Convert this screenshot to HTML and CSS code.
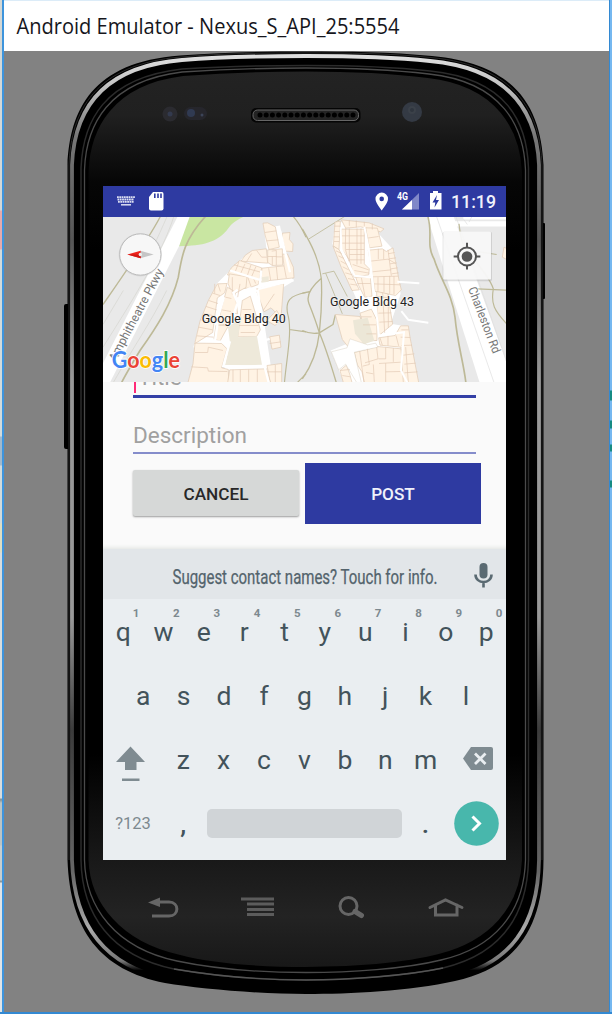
FILE: index.html
```html
<!DOCTYPE html>
<html lang="en">
<head>
<meta charset="utf-8">
<title>Android Emulator</title>
<link rel="stylesheet" href="styles.css">
</head>
<body>
<div class="window">
  <header class="titlebar">
    <svg width="400" height="40" viewBox="0 0 400 40"><text class="caption" x="12.500" y="23" textLength="383" lengthAdjust="spacingAndGlyphs">Android Emulator - Nexus_S_API_25:5554</text></svg>
  </header>
  <main class="stage">
    <svg class="device" viewBox="0 51 612 963" width="612" height="963">
      <defs>
        <linearGradient id="face" x1="0" y1="70" x2="0" y2="970" gradientUnits="userSpaceOnUse">
          <stop offset="0" stop-color="#232323"/><stop offset=".05" stop-color="#202020"/><stop offset=".125" stop-color="#060606"/><stop offset=".2" stop-color="#000"/><stop offset=".76" stop-color="#000"/><stop offset=".88" stop-color="#191919"/><stop offset=".94" stop-color="#232323"/><stop offset="1" stop-color="#171717"/>
        </linearGradient>
        <linearGradient id="shine" x1="0" y1="52" x2="0" y2="994" gradientUnits="userSpaceOnUse">
          <stop offset="0" stop-color="#e2e2e2"/><stop offset=".035" stop-color="#c4c4c4"/><stop offset=".09" stop-color="#777"/><stop offset=".2" stop-color="#555"/><stop offset=".35" stop-color="#999"/><stop offset=".6" stop-color="#999"/><stop offset=".72" stop-color="#3b3b3b"/><stop offset=".87" stop-color="#666"/><stop offset=".93" stop-color="#aaa"/><stop offset=".965" stop-color="#777"/><stop offset=".975" stop-color="#000"/>
        </linearGradient>
      </defs>
      <rect x="64" y="304" width="8" height="145" rx="2"/>
      <rect x="538" y="223" width="7" height="76" rx="1"/>
      <path d="M67.500 165C70 110 92 62 180 55.500C225 52 265 51.500 306 51.500S390 52 432 56C520 64 541 112 543.500 165V860C543 930 515 968 455 981C410 991 350 994 306 994S200 989 165 983C100 970 70 930 67.500 860Z"/>
      <path d="M72 165C74 116 96 67 182 60C225 56.500 265 56 306 56S388 56.500 430 61C516 69 537 118 539 165V860C538 926 510 964 452 977C410 986 350 988 306 988S200 985 168 979C104 966 74 925 72 860Z" fill="none" stroke="url(#shine)" stroke-width="3.800"/>
      <path d="M69 860V165C71 112 94 64 181 57C225 53 265 53 306 53S389 53 431 57.500C518 66 540 114 542 165V860" fill="none" stroke="#333" stroke-width=".8"/>
      <g fill="none" stroke="#2b2b2b" stroke-width="1.500">
        <path d="M81 168C83 122 103 78 182 69C230 66 268 65.500 306 65.500S390 66.500 430 71C508 79 527 123 528.500 168V860C527 920 498 955 443 968C405 976 350 980 306 980S215 976 174 969C111 956 82 915 81 860Z"/>
        <path stroke="#4a4a4a" stroke-width="1.300" d="M84.500 170C86 125 108 81 182 72C230 69 268 68 306 68S390 69.500 429 74C503 82 524 127 525.500 170V860C524 913 494 948 441 960C405 969 350 972.500 306 972.500S215 969 177 961C115 948 85.500 907 84.500 860Z"/>
        <path stroke="#555" stroke-width="1.300" d="M174 969C215 976 265 980 306 980S405 976 443 968"/>
      </g>
      <path d="M87.500 172C89 129 111 84 183 75C230 71.500 268 70.500 306 70.500S388 72 428 77C499 85 521 131 523 172V860C521 908 490 942 439 955C405 964 350 968 306 968S215 965 180 956C120 943 89 903 87.500 860Z" fill="url(#face)" stroke="#000" stroke-width="2"/>
      <g>
        <circle cx="170" cy="114" r="7.500" fill="#2b2b30"/><circle cx="170" cy="114" r="2.500" fill="#333a4e"/>
        <rect x="184" y="107" width="23" height="13" rx="6.500" fill="#26262c"/><circle cx="191" cy="113" r="4" fill="#303a52"/><circle cx="202" cy="115" r="1.500" fill="#3c4458"/>
        <circle cx="412" cy="112" r="10" fill="#343a44"/><circle cx="412" cy="110" r="4" fill="#3b4149"/><circle cx="412" cy="110" r="2" fill="#2f353e"/>
        <rect x="251" y="108" width="109.500" height="14.500" rx="5" fill="#050505"/>
        <rect x="253" y="110" width="105.500" height="10.500" rx="4.500" fill="#242424" stroke="#666"/>
        <path d="M260 115H355" stroke="#000" stroke-width="5" stroke-linecap="round" stroke-dasharray="0 6.200"/>
      </g>
      <g fill="none" stroke="#666" stroke-width="3">
        <path d="M158 902H169C179.500 902 179.500 916 169 916H152"/><path d="M148 902.500L160 897.500V907Z" fill="#666" stroke="none"/>
        <path d="M241 899H274M247 904H274M247 909.500H274M247 914.500H274" stroke-width="3" stroke="#5c5c5c"/>
        <circle cx="348.500" cy="906" r="8.500"/><path d="M355 911.500L361.500 915.500" stroke-width="5" stroke-linecap="round"/>
        <path d="M430 907.500L445.500 900L462 907.500M435.500 905V915H457V905" stroke-linecap="round"/>
      </g>
    </svg>
    <section class="screen">
      <div class="status">
        <svg width="403" height="31" viewBox="103 186 403 31">
          <g stroke="#dcdff2" stroke-width="1.800" stroke-dasharray="1.800 .5"><path d="M117 197.200H135M117.500 199.500H134M118 201.800H134"/></g><path d="M121 204.800H131" stroke="#dcdff2" stroke-width="1.500"/>
          <path d="M153 192H162Q163.500 192 163.500 194V208.500Q163.500 210.500 161.500 210.500H151Q149 210.500 149 208.500V197Z" fill="#fff"/><path d="M154.800 193.500V198M158 193.500V198M161 193.500V198" stroke="#2e3aa1" stroke-width="1.600"/>
          <path fill="#fff" fill-rule="evenodd" d="M381.700 210.500C379 206.500 375.500 202.500 375.500 198.800A6.200 6.200 0 0 1 388 198.800C388 202.500 384.500 206.500 381.700 210.500ZM381.700 196.600A2.300 2.300 0 1 0 381.700 201.200A2.300 2.300 0 1 0 381.700 196.600"/>
          <text x="397" y="200" class="lte" textLength="11" lengthAdjust="spacingAndGlyphs">4G</text>
          <path d="M402 209.500L419 193V209.500Z" fill="#8088c8"/><path d="M402 209.500L412 200V209.500Z" fill="#fff"/>
          <path d="M430 193H433V191H438V193H441.500V209.500H430Z" fill="#fff"/><path d="M437 195L432.500 202.500H435.300L434.500 207.500L439 200H436Z" fill="#2e3aa1"/>
          <text x="451" y="208.200" class="clock" textLength="45" lengthAdjust="spacingAndGlyphs">11:19</text>
        </svg>
      </div>
      <svg class="map" width="403" height="165.500" viewBox="103 216.500 403 165.500">
        <g transform="translate(100 180) scale(.33333)">
          <path d="M262 100H450C400 122 395 130 380 150C350 185 310 196 237 197Z" fill="#c9e6a2"/>
          <path d="M234 106H270L237 197L30 606H9V548Z" fill="#fff"/>
          <g fill="none" stroke="#d5d5cf" stroke-width="2"><path d="M222 106C190 210 110 340 9 500M202 106C170 180 150 220 125 260M9 432L70 330M200 330C150 430 100 500 40 606"/></g>
          <g fill="none" stroke="#bdb997" stroke-width="5" stroke-linejoin="round"><path stroke-width="4" d="M182 106C150 170 80 270 9 372"/><path d="M318 106C250 180 245 230 235 290C215 370 170 440 120 510C90 560 75 585 65 606"/><path stroke-width="3.500" d="M578 106Q600 130 618 170M618 336C570 345 555 360 563 400C578 450 560 530 553 610M568 447L618 454M588 610L618 580"/></g>
          <path d="M490 130L510 140L540 135L555 210L570 280L580 302L550 320L478 329L520 606H370L375 540L280 500L300 430L350 310L430 230L500 210Z" fill="#fff"/>
          <g class="rooms">
            <path d="M489 128L503 127L526 139L538 200L507 207L495 163Z"/><path d="M547 158L570 156L568 177L579 190L578 213L557 212L546 174Z"/>
            <path d="M548 221L562 220L580 260L582 292L483 303L486 263L552 256Z"/><path d="M503 208L547 205L548 254L517 255L503 246Z"/><path d="M457 210L499 205L503 248L423 242L436 224Z"/>
            <path d="M419 240L485 262L475 312L445 323L415 324L438 296L382 283L394 262Z"/><path d="M388 280L441 289L438 321L398 342L384 309Z"/>
            <path d="M352 310L381 309L374 337L352 352L338 456L284 490L300 422L325 360Z"/><path d="M382 320L405 334L413 400L394 397L389 430L354 434L365 380Z"/>
            <path d="M468 326L551 309L543 412L513 382L492 394Z"/><path d="M427 360L451 347L481 448L470 468L413 469Z"/>
            <path d="M348 434L385 436L360 482L342 476Z"/><path d="M285 488L365 489L381 505L365 562L385 567L386 606H264L279 550Z"/><path d="M509 469L538 464L543 500L516 506Z"/><path d="M501 555L545 549V606H511Z"/><path d="M389 568L500 565L511 606H383Z"/><path d="M530 390L545 415L525 435L500 420Z"/>
          </g>
          <path d="M384 440L425 408L414 470L471 467L486 553L375 556L390 487Z" fill="#eee9da"/>
          <path d="M484 290L506 287V304L484 307Z" fill="#eee9da"/>
          <path class="walls" d="M495 156L529 151M500 181L535 178M470 210L485 230H500M455 219L440 243M515 212L529 210V254M529 229H546M503 228H530M517 255V228M506 263L512 299M529 258L533 298M552 256L559 293M417 243L405 276M435 250L421 281M453 253L441 288M468 258L454 290M402 253L482 275M390 271L475 296M443 289L453 318M459 290L467 309M397 342V290M413 350L420 310M338 338L360 345M326 360L354 369M318 378L350 388M311 398L345 407M302 418L341 427M296 440L338 448M291 466L341 470M344 310V339M354 311L361 333M376 350L394 354M365 388L393 393M427 387H454M430 410H468M417 435H475M422 456H465M490 389L523 340M285 516H323L325 500L369 510M274 559L323 562L325 572L382 573M399 568V606M421 568V606M446 567V606M472 566V606M502 574H544M526 553V606M509 489L543 484"/>
          <path d="M426 335L450 323L474 332L492 480L509 475M372 350L357 400L345 482L389 486L370 556L494 559L506 606M413 328L400 337L413 367L400 405M540 150L553 205L570 275M390 270L485 300M484 270L478 325L581 299" fill="none" stroke="#fff" stroke-width="7"/>
          <text class="place" x="305" y="427" textLength="252" lengthAdjust="spacingAndGlyphs">Google Bldg 40</text>
          <text class="road" transform="translate(47 545) rotate(-62)" textLength="308" lengthAdjust="spacingAndGlyphs">Amphitheatre Pkwy</text>
          <circle cx="121" cy="223" r="65" fill="#aaa" opacity=".25"/><circle cx="121" cy="222" r="62" fill="#f7f7f7" stroke="#bbb" stroke-width="3"/>
          <path d="M121 211L161 222L121 233Z" fill="#c5c5c5"/><path d="M82 222L122 211V233Z" fill="#f0241d"/><path d="M82 222L122 233V222Z" fill="#d01a15"/><circle cx="121" cy="222" r="5" fill="#eee"/>
          <text class="logo" x="35" y="563" textLength="205" lengthAdjust="spacingAndGlyphs"><tspan fill="#4285f4">G</tspan><tspan fill="#ea4335">o</tspan><tspan fill="#fbbc05">o</tspan><tspan fill="#4285f4">g</tspan><tspan fill="#34a853">l</tspan><tspan fill="#ea4335">e</tspan></text>
        </g>
        <g transform="translate(304 180) scale(.33333)">
          <path d="M369 106H448L610 552V610H528Z" fill="#fff"/><path d="M440 122H610V138H445ZM478 105H610V117H478Z" fill="#fff"/>
          <path d="M397 106L570 606M455 106L610 550M478 115L490 132M505 106L495 125" fill="none" stroke="#dedede" stroke-width="2"/>
          <g fill="none" stroke="#bdb997" stroke-width="5" stroke-linejoin="round">
            <path d="M371 106C388 160 365 190 390 235C410 300 445 340 453 410C460 490 480 550 486 610"/>
            <path stroke-width="4" d="M-5 145C15 180 45 230 52 295C55 360 50 420 46 457C40 510 20 560-5 595M-5 450Q20 462 46 457L87 432L94 403M46 457C65 500 80 550 98 610M52 293C20 320 5 345 15 370Q35 420 46 457M-5 338L20 333"/>
            <path stroke-width="2.500" d="M15 175L125 106M55 280L90 272L130 348M65 278L115 400"/>
            <path stroke-width="3.500" d="M465 130C470 175 475 200 500 225C530 260 560 300 568 325C560 370 570 390 610 432M520 325L610 329M526 214L578 222"/>
          </g>
          <path d="M94 124L176 130L220 155L270 210L290 340L260 430L310 438L340 606H120L80 510L190 465L155 350L85 190Z" fill="#fff"/>
          <g class="rooms">
            <path d="M93 125L109 122L105 208L88 196Z"/><path d="M112 118L195 127L240 145L230 154L170 139L125 143Z"/>
            <path d="M112 146H181V250L196 265L194 283L150 290L136 238L112 205Z"/><path d="M185 142L220 143L234 197L196 202Z"/><path d="M87 197L105 207L166 328L144 330L112 261Z"/>
            <path d="M193 209L235 205L247 213L267 202L286 304L292 328L275 345L213 333L202 262Z"/>
            <path d="M155 290H199L204 347L182 350L164 315Z"/><path d="M218 333L251 340L266 431L226 464L219 410Z"/>
            <path d="M94 402L168 408L187 486L131 497L115 477Z"/><path d="M168 398L202 386L219 420V480L191 481Z"/>
            <path d="M224 472L273 465L290 436H313L318 470L344 606H287L291 500L228 494Z"/>
            <path d="M151 516L189 507L220 498L291 505L298 606H181L174 574L160 553Z"/><path d="M108 570L127 554L137 580L144 606H118Z"/>
          </g>
          <path d="M147 419L191 412L211 481L180 491L153 460Z" fill="#ece7d7"/>
          <path d="M82 514L129 502L138 475L191 493L215 488L222 500L151 515L160 555L172 606H158L125 551L104 568Z" fill="#fff" stroke="#c8bda8" stroke-width="1"/>
          <path class="walls" d="M125 143L124 206L135 245M136 144V242M159 144V252M171 144V250M112 166H181M114 188H181M126 207H181M137 222H181M138 238H181M146 252L194 268M151 270L196 278M91 137H108M91 153H108M89 169H106M90 183H106M136 119V136M157 120V141M181 124V138M205 129V147M189 173L224 168M96 211L113 219M103 226L120 234M110 242L127 251M116 259L134 268M124 277L145 283M132 294L152 298M139 311L160 314M199 242L252 236L275 249M252 220L272 216M255 235L276 232M258 250L278 247M261 265L281 262M263 280L284 277M204 274L262 268M204 289L283 287M223 205V236M239 207V236M252 208L262 286M222 290V333M240 288V335M257 286V340M270 287V341M205 310L290 313M160 309H200M172 291L183 347M213 347L253 352M219 374L258 375M223 398L262 397M226 425L266 423M236 336L242 457M253 341V442M171 409H203M177 433H216M187 460H217M228 472L235 494M252 466V496M276 465L284 496M292 448H314M290 470L319 471M293 495L324 494M298 524L331 520M301 551L335 548M301 577L341 574M305 500L313 606M167 512L180 606M190 505L196 552L176 557M218 500L222 535L183 547M245 501V535H223M268 503V544M245 548V606M225 549L292 545M245 574L292 573M186 576L208 580M208 552L211 606M108 570L137 567M115 585L139 589"/>
          <path d="M181 139L194 203L210 335L225 465L300 455L291 570L310 606M110 140L112 205L152 286L205 291M280 304L346 308M292 392L313 418L373 427M190 350L265 362" fill="none" stroke="#fff" stroke-width="6"/>
          <path d="M600 200L595 230L610 238V205Z" fill="#fff3e4" stroke="#dfc3ad" stroke-width="2"/>
          <text class="place" x="78" y="377" textLength="252" lengthAdjust="spacingAndGlyphs">Google Bldg 43</text>
          <text class="road" transform="translate(492 325) rotate(69)" textLength="210" lengthAdjust="spacingAndGlyphs">Charleston Rd</text>
          <rect x="416" y="154" width="148" height="148" rx="5" fill="#999" opacity=".3"/><rect x="418" y="153" width="143" height="144" rx="4" fill="#f9f9f9" opacity=".94"/>
          <g fill="none" stroke="#555" stroke-width="6"><circle cx="489" cy="228" r="27"/><path d="M489 187V202M489 254V267M449 228H463M515 228H529"/></g><circle cx="489" cy="228" r="16" fill="#555"/>
        </g>
      </svg>
      <div class="form">
        <div class="field title"><span class="cursor"></span><span class="hint">Title</span></div>
        <div class="field description"><span class="hint">Description</span></div>
        <div class="actions"><div class="cancel">CANCEL</div><div class="post">POST</div></div>
      </div>
      <div class="suggest">
        <svg width="403" height="50" viewBox="103 549 403 50">
          <text x="172.500" y="584" class="tip" textLength="265" lengthAdjust="spacingAndGlyphs">Suggest contact names? Touch for info.</text>
          <rect x="479.500" y="563" width="8" height="15.500" rx="4" fill="#5a6a72"/><path d="M475.500 574.500C475.500 584.500 491.500 584.500 491.500 574.500M483.500 582V587.500" fill="none" stroke="#5a6a72" stroke-width="2.600"/>
        </svg>
      </div>
      <div class="keyboard">
        <div class="row first"><span>q<i>1</i></span><span>w<i>2</i></span><span>e<i>3</i></span><span>r<i>4</i></span><span>t<i>5</i></span><span>y<i>6</i></span><span>u<i>7</i></span><span>i<i>8</i></span><span>o<i>9</i></span><span>p<i>0</i></span></div>
        <div class="row second"><span>a</span><span>s</span><span>d</span><span>f</span><span>g</span><span>h</span><span>j</span><span>k</span><span>l</span></div>
        <div class="row third">
          <svg width="60" height="64" viewBox="103 728 60 64"><path d="M130.500 747.500L145 763H136.500V771H125V763H116ZM122 779.500H139.500V782H122Z" fill="#7f8b91"/></svg>
          <span>z</span><span>x</span><span>c</span><span>v</span><span>b</span><span>n</span><span>m</span>
          <svg width="60" height="64" viewBox="446 727.500 60 64"><path d="M471 747.500H491Q493 747.500 493 749.500V768.500Q493 770.500 491 770.500H471L463 759Z" fill="#7f8b91"/><path d="M475 754L485.500 764.500M485.500 754L475 764.500" stroke="#eaeef1" stroke-width="2.800"/></svg>
        </div>
        <div class="row fourth"><span class="symbols">?123</span><span class="comma">,</span><div class="space"></div><span class="period">.</span>
          <svg class="enter" width="45" height="45" viewBox="0 0 45 45"><circle cx="22.500" cy="22.500" r="22.300" fill="#48b7ac"/><path d="M18.500 15.500L25.500 22.500L18.500 29.500" fill="none" stroke="#fff" stroke-width="3"/></svg>
        </div>
      </div>
    </section>
  </main>
</div>
</body>
</html>
```
FILE: styles.css
```css
*, *::before, *::after { box-sizing: border-box; }
body { margin: 0; width: 612px; height: 1014px; overflow: hidden; background: #dce1e3; font-family: Roboto, "Noto Sans", sans-serif; }
svg { display: block; }
.window { position: relative; width: 612px; height: 1014px; border-bottom: 2px solid #3389d2; background: #828282; }
.window::before, .window::after { content: ""; position: absolute; z-index: 2; top: 0; bottom: 0; }
.window::before { left: 0; width: 4px; border-right: 2px solid #3e94dc; background: linear-gradient(#d5d8d5 0 210px, #e6aaaa 211px 249px, #d3dad9 250px 436px, #a2b9cb 437px 465px, #d2dad9 466px 523px, #e0dec0 524px 552px, #d9dddc 553px 798px, #8b9697 799px 800px, #bcc4c3 803px 845px, #c8cecd 846px 880px, #8b9697 881px 882px, #e1e4e5 883px); }
.window::after { right: 0; width: 3px; border-left: 1px solid #3389d2; background: linear-gradient(#76b8f0 0 390px, #168b83 391px 400px, #76b8f0 401px 420px, #168b83 421px 428px, #76b8f0 429px 444px, #168b83 445px 451px, #76b8f0 452px 480px, #168b83 481px 487px, #76b8f0 488px); }
.titlebar { height: 51px; padding: 10px 0 0 4px; border-top: 1px solid #dcecf8; background: #fff; }
.titlebar svg { overflow: visible; }
.caption { font: 21.500px "Open Sans", "Noto Sans", sans-serif; fill: #16161c; }
.stage { position: relative; height: 961px; padding: 135px 0 0 103px; background: #828282; }
.device { position: absolute; left: 0; top: 0; }
.screen { position: relative; display: flex; flex-direction: column; width: 403px; height: 674px; background: #fafafa; overflow: hidden; }
.status { height: 30.500px; flex: none; background: #2e3aa1; overflow: hidden; }
.lte { font: 700 10px Roboto, sans-serif; fill: #fff; }
.clock { font: 500 19px Roboto, sans-serif; fill: #f1f2fb; }
.map { flex: none; background: #e9e9e9; }
.rooms { fill: #fff3e4; stroke: #e0c8b2; stroke-width: 2px; stroke-linejoin: round; }
.walls { fill: none; stroke: #e2c9b3; stroke-width: 2px; }
.place { font: 400 39px Roboto, sans-serif; fill: #222; stroke: #fff; stroke-width: 4px; paint-order: stroke; stroke-opacity: .6; }
.road { font: 37px Roboto, sans-serif; fill: #777; stroke: #fff; stroke-width: 4px; paint-order: stroke; }
.logo { font: 700 70px Lato, "Open Sans", sans-serif; stroke: #fff; stroke-width: 5px; paint-order: stroke; }
.form { flex: none; height: 167px; padding-left: 30px; overflow: hidden; box-shadow: inset 0 -4px 4px -3px #dfe2df; }
.field { width: 343px; color: #a0a0a0; font-size: 22.500px; line-height: 28px; }
.title { display: flex; height: 15.500px; align-items: flex-end; border-bottom: 3px solid #3440a6; }
.title .hint { height: 28px; margin-bottom: 4px; }
.cursor { width: 2px; height: 26px; margin: 0 2px 2px 1px; background: #ff2b78; }
.description { height: 56px; padding-top: 23.500px; border-bottom: 2px solid #858dcb; }
.actions { display: flex; align-items: center; padding-top: 9.500px; gap: 6px; font-size: 17.200px; font-weight: 500; }
.cancel { display: flex; align-items: center; justify-content: center; width: 166px; height: 46px; padding-top: 1px; border-radius: 2px; background: #d6d8d7; color: #282828; box-shadow: 0 1px 2px #9b9b9b; }
.post { display: flex; align-items: center; justify-content: center; width: 176px; height: 60.500px; padding-top: 1px; background: #2e3aa1; color: #f0f1fb; }
.suggest { height: 50px; flex: none; background: #e2e6e9; }
.suggest svg { overflow: visible; }
.tip { font: 20px Roboto, sans-serif; fill: #53636c; stroke: #53636c; stroke-width: .25px; }
.keyboard { flex: 1; background: #eaeef1; color: #43535b; font-size: 26.500px; line-height: 32px; }
.row { display: flex; height: 64px; }
.row > span { position: relative; flex: none; width: 40.350px; padding-top: 17px; text-align: center; }
.row i { position: absolute; top: 6px; right: 4px; color: #7d898f; font: 700 11.500px/16px Roboto, sans-serif; }
.second { padding-left: 20px; }
.third { justify-content: space-between; }
.fourth { align-items: center; height: 65px; }
.fourth .symbols { width: 60px; padding: 0; color: #7d898f; font-size: 16.500px; }
.fourth .comma, .fourth .period { padding: 0; font-weight: 500; }
.space { width: 195px; height: 29.500px; margin-left: 3.500px; border-radius: 5px; background: #d0d4d7; }
.period { margin-left: 3.500px; }
.enter { margin-left: 8px; }
```
